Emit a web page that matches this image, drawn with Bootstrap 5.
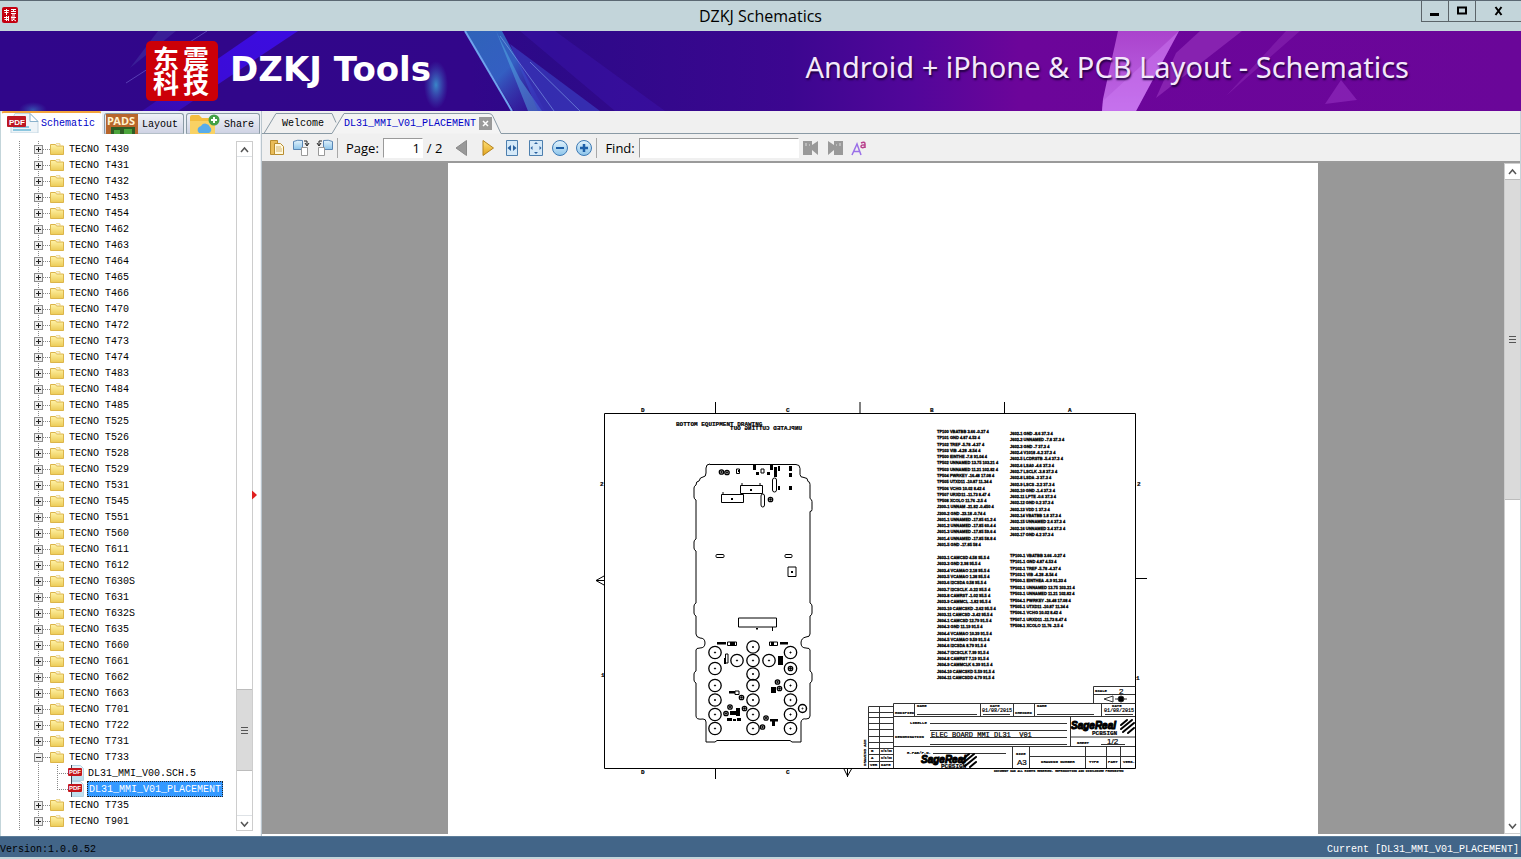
<!DOCTYPE html>
<html lang="en">
<head>
<meta charset="utf-8">
<meta name="viewport" content="width=device-width, initial-scale=1">
<title>DZKJ Schematics</title>
<link href="https://cdn.jsdelivr.net/npm/bootstrap@5.3.0/dist/css/bootstrap.min.css" rel="stylesheet">
<style>
:root { --frame:#c3d5da; --panel:#f0f0f0; --edge:#8a9aa5; --mono:"Liberation Mono","Noto Sans CJK SC",monospace; --ui:"Noto Sans","Open Sans",sans-serif; }
body { font:10px/16px var(--mono); color:#000; background:var(--frame); }
button, input { font:inherit; color:inherit; }
button { background:none; border:0; padding:0; }
.titlebar { height:31px; border-top:1px solid #5b6873; font:16px/30px "Open Sans","Noto Sans",sans-serif; }
.titlebar h1 { font:inherit; }
.app-icon { width:16px; height:16px; left:2px; top:6px; }
.win-buttons { border:1px solid #5b6469; border-top:0; border-right:0; height:21px; }
.win-buttons button { width:27px; border-right:1px solid #5b6469; }
.win-buttons button:last-child { width:45px; border-right:0; }
.banner { height:80px; padding-left:146px; padding-right:112px; color:#fff; background:#32068a; overflow:hidden; }
.banner-art { position:absolute; inset:0; width:100%; height:100%; }
.brand-mark { width:72px; height:60px; overflow:visible; }
.brand-name { font:bold 34px/40px "DejaVu Sans",sans-serif; margin:0 0 4px 12px; }
.tagline { font:29px/40px var(--ui); padding-bottom:8px; text-shadow:1px 2px 2px #200040; color:#f4e8fb; }
.work { padding-right:1px; }
.side { width:260px; border-left:1px solid var(--frame); }
.side-tabs { height:23px; background:#e9eef4; gap:2px; }
.side-tabs button { height:21px; margin-top:2px; border:1px solid var(--edge); border-bottom-color:#b4bfc8; border-radius:3px 3px 0 0; background:linear-gradient(#f0f2f8,#cfd3e4); padding:0 5px 0 1px; }
.side-tabs button.active { height:23px; margin-top:0; background:#fff; border-color:#fff; border-top:2px solid #f2a33a; color:#0000c8; padding:0 0 0 5px; gap:2px; }
.side-tabs svg { width:32px; height:20px; }
.side-tabs span { padding-top:2px; }
.tree-box { padding:7px 7px 5px 0; }
.tree { list-style:none; margin:0; padding:0; height:0; min-height:100%; overflow:hidden;
  background:repeating-linear-gradient(#888 0 1px,transparent 1px 2px) 18px 0/1px 100% no-repeat,
  repeating-linear-gradient(#888 0 1px,transparent 1px 2px) 37px 0/1px 100% no-repeat; }
.tree li { height:16px; padding-left:33px; }
.tree li.leaf { padding-left:56px; }
.toggle { width:9px; height:9px; border:1px solid #8c8c8c; background:#eee; flex:none; position:relative; }
.toggle::before, .toggle.plus::after { content:""; position:absolute; left:1px; top:3px; width:5px; height:1px; background:#222; }
.toggle.plus::after { left:3px; top:1px; width:1px; height:5px; }
.dots { width:7px; height:1px; background:repeating-linear-gradient(90deg,#888 0 1px,transparent 1px 2px); }
.leaf .stem { width:11px; height:16px; background:repeating-linear-gradient(#888 0 1px,transparent 1px 2px) 0 0/1px 100% no-repeat, repeating-linear-gradient(90deg,#888 0 1px,transparent 1px 2px) 0 8px/100% 1px no-repeat; }
.leaf.last .stem { background-size:1px 8px,100% 1px; }
.tree a { color:#000; text-decoration:none; line-height:14px; padding:2px 1px 0; white-space:nowrap; }
.tree .folder + a { margin-left:4px; }
.tree .pdf + a { margin-left:3px; }
.tree a.picked { color:#fff; background:#3399ff; outline:1px dotted #222; outline-offset:-1px; padding:2px 2px 0; }
.vscroll { width:17px; border:1px solid #cdcdcd; background:#fff; }
.vscroll button { height:15px; line-height:0; }
.vscroll .thumb { background:#dadada; border-top:1px solid #bcbcbc; border-bottom:1px solid #bcbcbc; }
.splitter { width:2px; background:#eef1f5; border-right:1px solid #bac6ce; }
.splitter svg { top:53%; }
.doc-tabs { height:23px; background:var(--panel); padding-left:20px; }
.doc-tabs > svg { position:absolute; left:0; top:0; width:100%; height:23px; }
.doc-tabs button { z-index:1; padding-top:3px; }
.doc-tabs .current { margin-left:20px; color:#0000c8; }
.doc-tabs .shut { margin-left:3px; padding-top:2px; }
.tools { height:29px; background:var(--panel); border-bottom:2px solid #9a9a9a; font:13px/20px "Open Sans","Noto Sans",sans-serif; padding-left:3px; }
.tools button { width:24px; height:24px; flex:none; line-height:0; }
.tools .prev { margin:0 2px 0 4px; }
.tools svg { width:18px; height:18px; }
.tools input { height:20px; border:1px solid #fff; border-color:#9a9a9a #fff #fff #9a9a9a; background:#fff; outline:0; }
.tools .rule { width:1px; height:20px; background:#a8a8a8; }
.page-no { width:40px; text-align:right; }
.find-text { width:160px; }
.viewer { background:#989898; overflow:hidden; }
.viewer .vscroll { width:16px; }
.sheet { width:870px; max-width:100%; background:#fff; height:0; min-height:100%; overflow:hidden; }
.sheet svg { width:100%; display:block; }
.foot-gap { height:2px; background:#fff; }
.ink { fill:none; stroke:#000; stroke-width:1; }
.hair { stroke-width:1; stroke:#333; }
.tx text { fill:#000; stroke:#000; stroke-width:.2; }
.t3 { font:bold 3px var(--mono); }
.t4 { font:bold 4px var(--mono); }
.t5 { font:5px var(--mono); }
.t6 { font:bold 6px var(--mono); }
.t7 { font:7px var(--mono); }
.t8 { font:8px "Liberation Sans",sans-serif; }
.net { font:bold 4px "Liberation Sans",sans-serif; }
.net text { stroke-width:.3; }
.logo-tx { font:italic bold 10px "Liberation Sans",sans-serif; }
.logo-tx text { stroke-width:1; }
.status { height:23px; background:#426588; border-top:1px solid #5d7d99; border-bottom:2px solid var(--frame); line-height:14px; }
.status .now { color:#fff; padding-right:2px; }
</style>
</head>
<body class="d-flex flex-column vh-100 overflow-hidden">

<svg width="0" height="0" class="position-absolute" aria-hidden="true">
  <defs>
    <linearGradient id="gold" x2="0" y2="1"><stop stop-color="#fff3a8"/><stop offset="1" stop-color="#eccb56"/></linearGradient>
    <linearGradient id="sky" x2="0" y2="1"><stop stop-color="#e3f3fc"/><stop offset="1" stop-color="#8cc4ea"/></linearGradient>
    <linearGradient id="amber" x2="0" y2="1"><stop stop-color="#ffe27a"/><stop offset="1" stop-color="#e0a21c"/></linearGradient>
  </defs>
  <symbol id="folder" viewBox="0 0 14 12"><path d="M.5 1.500h5l1 1.500h7v8.500H.5z" fill="url(#gold)" stroke="#dcb54a"/><path d="M6 .8h4v2" fill="none" stroke="#e9cd71"/></symbol>
  <symbol id="pdf" viewBox="0 0 16 16"><path d="M3.500 .5h9l3 3v12h-12z" fill="#e6f2f8" stroke="#b5d3e2"/><path d="M4 11h11v4H4z" fill="#bfe0ef"/><path d="M3.500 0v16" stroke="#445"/><rect y="3" width="14" height="8" rx="1" fill="#c4161c"/><text x="1" y="9" font-family="Liberation Sans" font-weight="bold" font-size="6" fill="#fff">PDF</text></symbol>
  <symbol id="up" viewBox="0 0 15 16"><path d="M4 10l3.500-4 3.500 4" fill="none" stroke="#555" stroke-width="1.500"/></symbol>
  <symbol id="down" viewBox="0 0 15 16"><path d="M4 6l3.500 4L11 6" fill="none" stroke="#555" stroke-width="1.500"/></symbol>
  <symbol id="grip" viewBox="0 0 7 7"><path d="M0 .5h7M0 3.500h7M0 6.500h7" stroke="#555"/></symbol>
</svg>

<header class="titlebar d-flex position-relative flex-shrink-0">
  <svg class="app-icon position-absolute" viewBox="0 0 16 16"><rect width="16" height="16" rx="2" fill="#c40010"/><path d="M2 3.500h5M4.500 2v6M2.500 5.500h4M9 2.500h5M11.500 2v2M9 4.500h5M9 6.500h5M10 8h3M2 10.500h5M4.500 9v5M2.500 12.500h4M6.500 9v5M9 10.500h5M10 9v5M12 9v3l-2 2M11 12l3 2" stroke="#fff" fill="none"/></svg>
  <h1 class="m-0 flex-grow-1 text-center">DZKJ Schematics</h1>
  <div class="win-buttons position-absolute end-0 top-0 d-flex">
    <button aria-label="Minimize"><svg class="d-block mx-auto" width="12" height="12"><path d="M1 9.500h9" stroke="#000" stroke-width="3"/></svg></button>
    <button aria-label="Maximize"><svg class="d-block mx-auto" width="12" height="12"><path d="M2 2.500h8v6H2z" fill="none" stroke="#000" stroke-width="2"/></svg></button>
    <button aria-label="Close"><svg class="d-block mx-auto" width="12" height="12"><path d="M2.500 2l6 8M8.500 2l-6 8" stroke="#000" stroke-width="2"/></svg></button>
  </div>
</header>

<section class="banner position-relative d-flex align-items-center flex-shrink-0">
  <svg class="banner-art" viewBox="0 31 1521 80" preserveAspectRatio="none" aria-hidden="true">
    <defs>
      <linearGradient id="bg"><stop stop-color="#30068a"/><stop offset=".31" stop-color="#32068a"/><stop offset=".36" stop-color="#2c0a88"/><stop offset=".52" stop-color="#3c0690"/><stop offset=".6" stop-color="#52069a"/><stop offset=".67" stop-color="#6c059a"/><stop offset="1" stop-color="#6a0699"/></linearGradient>
      <linearGradient id="beam" x2="1" y2="1"><stop stop-color="#2f63b8"/><stop offset=".5" stop-color="#3468c8" stop-opacity=".9"/><stop offset="1" stop-color="#3a1aa8" stop-opacity=".2"/></linearGradient>
      <linearGradient id="pink" x2="0" y2="1"><stop stop-color="#b14ad2"/><stop offset="1" stop-color="#c875f0"/></linearGradient>
      <linearGradient id="blueray" x1="1" x2="0" y2="1"><stop stop-color="#3c0ce0"/><stop offset=".55" stop-color="#3b0cd8"/><stop offset="1" stop-color="#3a10c0" stop-opacity=".6"/></linearGradient>
      <radialGradient id="glow"><stop stop-color="#3a86c8"/><stop offset="1" stop-color="#3a60c0" stop-opacity="0"/></radialGradient>
    </defs>
    <path d="M0 31h1521v80H0z" fill="url(#bg)"/>
    <path d="M258 31h40L178 111h-36z" fill="url(#blueray)"/>
    <path d="M158 31h18L130 68z" fill="#4436a4" opacity=".5"/><path d="M207 31L126 83" stroke="#6a58c8" opacity=".7"/>
    <ellipse cx="33" cy="110" rx="14" ry="8" fill="url(#glow)" opacity=".6"/>
    <ellipse cx="436" cy="85" rx="12" ry="24" fill="url(#glow)"/>
    <path d="M465 31h37l43 80h-31z" fill="url(#beam)"/>
    <path d="M465 31l47 80" stroke="#6ea4ee" stroke-width="2"/>
    <path d="M496 31l24 48 22 32h-14z" fill="#59b7e8" opacity=".45"/>
    <path d="M510 44l90 67h-62z" fill="#3c4ad0" opacity=".55"/>
    <path d="M500 36l54 75M530 62l50 49" stroke="#92b8f4" opacity=".5"/>
    <path d="M555 31l110 80h-50L520 31z" fill="#4319c0" opacity=".3"/>
    <path d="M1118 31h61l-43 80h-34l1-12z" fill="url(#pink)" opacity=".9"/>
    <path d="M1103 101l76-70-43 80h-34z" fill="#ce7cf4" opacity=".45"/>
    <path d="M1200 31h42l-86 67 20-45z" fill="#9a36c0" opacity=".6"/>
    <path d="M1286 31h14l-74 65z" fill="#8d2cb6" opacity=".5"/>
    <path d="M1341 80l16 20-32 4z" fill="#9c38c8" opacity=".5"/>
  </svg>
  <svg class="brand-mark position-relative" viewBox="0 0 72 60" role="img" aria-label="东震科技">
    <rect width="72" height="60" rx="5" fill="#cc0008"/>
    <g fill="#fff" font-family="Noto Sans CJK SC" font-weight="bold" font-size="26"><text x="7" y="28">东</text><text x="37" y="28">震</text><text x="7" y="52">科</text><text x="37" y="52">技</text></g>
  </svg>
  <div class="brand-name position-relative text-nowrap">DZKJ Tools</div>
  <div class="tagline position-relative ms-auto text-nowrap">Android + iPhone &amp; PCB Layout - Schematics</div>
</section>

<main class="work d-flex flex-grow-1">
  <aside class="side d-flex flex-column bg-white flex-shrink-0">
    <div class="side-tabs d-flex flex-shrink-0" role="tablist">
      <button class="active d-flex align-items-center flex-grow-1" role="tab"><svg viewBox="0 0 32 20"><path d="M8 .5h15l8 8V20H4V9z" fill="#eef4f8" stroke="#c3d6e2"/><path d="M23 .5l8 8h-8z" fill="#fff" stroke="#8ab2cc"/><path d="M6 14h16M6 17h18" stroke="#8cc7df" stroke-width="2"/><rect y="3" width="19" height="11" rx="1" fill="#bd1622"/><text x="2" y="12" font-family="Liberation Sans" font-weight="bold" font-size="8" fill="#fff">PDF</text></svg><span>Schematic</span></button>
      <button class="d-flex align-items-center" role="tab"><svg viewBox="0 0 32 20"><path d="M0 0h32v20H0z" fill="#b8662c"/><path d="M5 13h24v7H5z" fill="#2f5d25"/><path d="M8 16h6v4H8zM18 15h8v5h-8z" fill="#4ca53c"/><text x="1" y="11" font-family="Noto Sans" font-weight="bold" font-size="11" fill="#fff3d0">PADS</text></svg><span class="ms-1">Layout</span></button>
      <button class="d-flex align-items-center" role="tab"><svg viewBox="0 0 32 20"><path d="M2 3q0-2 2-2h7l3 3h12v16H2z" fill="#f3bd3e"/><path d="M2 7h25v13H2z" fill="#f9d264"/><path d="M11 19a4 4 0 012-7 5 5 0 019 1 3.500 3.500 0 01-1 6z" fill="#58acea"/><circle cx="26" cy="6" r="5.500" fill="#43a047"/><path d="M26 3v6M23 6h6" stroke="#fff" stroke-width="2"/></svg><span class="ms-1">Share</span></button>
    </div>
    <div class="tree-box d-flex flex-grow-1">
      <ul class="tree flex-grow-1" id="tree"></ul>
      <div class="vscroll d-flex flex-column">
        <button aria-label="Scroll up" class="border-bottom"><svg width="15" height="16"><use href="#up"/></svg></button>
        <div style="flex:533"></div>
        <div class="thumb d-flex align-items-center justify-content-center" style="flex:80"><svg width="7" height="7"><use href="#grip"/></svg></div>
        <div style="flex:44"></div>
        <button aria-label="Scroll down" class="border-top"><svg width="15" height="16"><use href="#down"/></svg></button>
      </div>
    </div>
  </aside>
  <div class="splitter flex-shrink-0 position-relative"><svg class="position-absolute end-0 translate-middle-y me-1" width="5" height="9"><path d="M0 0l5 4.500L0 9z" fill="#e02020"/></svg></div>

  <section class="d-flex flex-column flex-grow-1 overflow-hidden">
    <div class="doc-tabs d-flex align-items-center position-relative flex-shrink-0" role="tablist">
      <svg aria-hidden="true"><path d="M2 22.500L14 2.500h56l4 9" fill="none" stroke="#8a9aa5"/><path d="M70 22.500L82 2.500h145q3 0 4 3l8 17H70" fill="#f4f4f4"/><path d="M0 22.500h70L82 2.500h145q3 0 4 3l8 17h1400" fill="none" stroke="#8a9aa5"/></svg>
      <button role="tab">Welcome</button>
      <button role="tab" class="current text-nowrap">DL31_MMI_V01_PLACEMENT</button>
      <button class="shut lh-1" aria-label="Close tab"><svg class="d-block" width="13" height="13"><path d="M0 0h13v13H0z" fill="#9a9a9a"/><path d="M4 4l5 5M9 4L4 9" stroke="#fff" stroke-width="1.500"/></svg></button>
    </div>
    <div class="tools d-flex align-items-center flex-shrink-0">
      <button aria-label="Open"><svg viewBox="0 0 18 18"><path d="M2.500 1.500h7v14h-7z" fill="#e9bc58" stroke="#b98d2f"/><path d="M6.500 4.500h6l3 3v8h-9z" fill="#fff8dc" stroke="#b98d2f"/><path d="M8 8h5M8 10h6M8 12h6" stroke="#d6b670"/></svg></button>
      <button aria-label="Rotate left"><svg viewBox="0 0 18 18"><path d="M1.500 2.500q4-2 9-1v9h-9z" fill="url(#sky)" stroke="#5a86b4"/><path d="M9.500 8.500h6v8h-6z" fill="#fff" stroke="#999"/><path d="M12 2h3v4M13 4l2 3 2-3" fill="none" stroke="#222"/></svg></button>
      <button aria-label="Rotate right"><svg viewBox="0 0 18 18"><path d="M7.500 1.500q5-1 9 1v8h-9z" fill="url(#sky)" stroke="#5a86b4"/><path d="M2.500 8.500h6v8h-6z" fill="#fff" stroke="#999"/><path d="M6 2H3v4M1 4l2 3 2-3" fill="none" stroke="#222"/></svg></button>
      <span class="rule"></span>
      <label for="pg" class="ms-2 me-1">Page:</label>
      <input id="pg" class="page-no" value="1"><span class="mx-1">/ 2</span>
      <button aria-label="Previous page" class="prev"><svg viewBox="0 0 18 18"><path d="M13.500 1.500v15L3 9z" fill="#999" stroke="#8a8a8a"/></svg></button>
      <button aria-label="Next page"><svg viewBox="0 0 18 18"><path d="M4 1.500v15L14.500 9z" fill="url(#amber)" stroke="#b5831e"/></svg></button>
      <button aria-label="Fit width"><svg viewBox="0 0 18 18"><path d="M3.500 1.500h11v15h-11z" fill="#d5e9f8" stroke="#4d7fae"/><path d="M8 6v6L4.500 9zM10 6v6L13.500 9z" fill="#2b62a0"/></svg></button>
      <button aria-label="Fit page"><svg viewBox="0 0 18 18"><path d="M2.500 1.500h13v15h-13z" fill="#d5e9f8" stroke="#4d7fae"/><path d="M7 5l2-2 2 2zM7 13l2 2 2-2zM5.500 7l-2 2 2 2zM12.500 7l2 2-2 2z" fill="#2b62a0"/></svg></button>
      <button aria-label="Zoom out"><svg viewBox="0 0 18 18"><circle cx="9" cy="9" r="7.500" fill="url(#sky)" stroke="#3d7ab5"/><path d="M5 9h8" stroke="#1d5fa8" stroke-width="2"/></svg></button>
      <button aria-label="Zoom in"><svg viewBox="0 0 18 18"><circle cx="9" cy="9" r="7.500" fill="url(#sky)" stroke="#3d7ab5"/><path d="M5 9h8M9 5v8" stroke="#1d5fa8" stroke-width="2.500"/></svg></button>
      <span class="rule"></span>
      <label for="fd" class="ms-2 me-1">Find:</label>
      <input id="fd" class="find-text">
      <button aria-label="Find previous"><svg viewBox="0 0 18 18"><path d="M1 2h9v4l6-4v14l-6-5v5H1z" fill="#999"/><path d="M3 4h2v3H3zM7 5h1v2H7z" fill="#bbb"/></svg></button>
      <button aria-label="Find next"><svg viewBox="0 0 18 18"><path d="M17 2H8v4L2 2v14l6-5v5h9z" fill="#999"/><path d="M13 4h2v3h-2zM10 5h1v2h-1z" fill="#bbb"/></svg></button>
      <button aria-label="Match case"><svg viewBox="0 0 18 18"><path d="M2 16L7 5l4 11M3.500 12.500h6" fill="none" stroke="#9a70e8" stroke-width="1.500"/><path d="M11 4q4-2 4 1v4M15 6q-4-.5-4 1.500t4 .5" fill="none" stroke="#b8408c" stroke-width="1.500"/></svg></button>
    </div>
    <div class="viewer d-flex flex-grow-1">
      <div class="flex-grow-1 d-flex justify-content-center">
        <div class="sheet">
          <svg viewBox="448 163 870 671" role="img" aria-label="Board placement drawing">
            <g class="ink">
              <path d="M604.500 413.500h531v355h-531zM715.500 402v11M860 402v11M1004.500 402v11M715.500 768v11M1136 578.500h11M604 576l-8 4.500 8 4.500M596 580.500h8M844 769l3.500 7 4-7M847.500 768v9"/>
              <path d="M710 464.500H796q4 0 4 4v6q0 3 4 3t4 4q2 0 2 3v14q2 1 2 3v8q0 2-2 2V603q2 1 2 3v7q0 2-2 3V634q0 3-4 3-5 1-5 6t5 5q4 0 4 2V671q2 1 2 3v6q0 2-2 3V716q0 3-4 3-4-1-5 3V742H792l-2-1.500H717l-2 1.500H706V722q0-3-3-3-7 1-7-3V683q-2-1-2-3v-6q0-2 2-3V650q0-2 4-2 5 0 5-5t-5-5q-4-1-4-4V616q-2-1-2-3v-7q0-2 2-3V551q-2-1-2-3v-6q0-2 2-3V500q-2-1-2-3v-9q0-2 2-3 0-4 3-4 1-4 4-4 3 0 3-4v-5q0-4 4-4z"/>
              <path d="M740.500 485.500h22v8h-22zM721.500 494.500h22v8h-22zM738.500 618h38v9h-38zM788 567h8v9.500h-8z"/>
              <rect x="772.500" y="478" width="4" height="14" rx="2"/><rect x="761" y="494" width="3.500" height="13" rx="2"/><rect x="716" y="554.500" width="8" height="3" rx="1"/><rect x="785" y="554.500" width="7" height="3" rx="1"/>
              <path d="M736.500 469h3v4.500h-3zM761 469h3v4h-3zM727.500 642h9v3.500h-9zM769.500 642h8v3.500h-8zM725.500 654h2.500v9h-2.500zM735 691h4v3.500h-4z"/>
            </g>
            <g>
              <path d="M753 465h3v5h-3zM770 465h3v5h-3zM774 467h3v10h-3zM778 466h2v5h-2zM789 466h3v5h-3zM789 473h3v4h-3zM789 486h3v4h-3zM778 486h2v4h-2zM756 472h3v3h-3zM767 472h3v3h-3zM750 489h2v2h-2zM731 498h2v2h-2zM791 571h2v2h-2zM738 470h1v2h-1zM717 642h9v2.500h-9zM730 642h5v3h-5zM780 642h8v2.500h-8zM771 642h3v3h-3zM756 628h2v1.500h-2zM772 627h1v4h-1zM729 691h6v2.500h-6zM771 687h5v6h-5zM778 656h5v9h-5zM736 708h4v8h-4zM730 711h6v4h-6zM727 718h5v3h-5zM733 719h3v2h-3zM737 718h4v3h-4zM770 719h8v2.500h-8zM772 721h3v5h-3zM724 658h2v6h-2z"/>
              <path class="ink" d="M742 485v-2M760 485v-2M723 494v-2"/>
            </g>
            <g id="pads" class="ink"></g>
            <g class="ink hair">
              <path d="M893.500 768V703.500h242M893 716.500h242M893 746.500h242M1070 737h65M1029 756.500h106M914.500 703v13M980.500 703v13M1013.500 703v13M1034.500 703v13M1101.500 703v13M1093.500 703v-16.500h42M1093 694.500h42M1070.500 716v30M1012.500 746v22M1029.500 746v22M1085.500 746v22M1106.500 746v22M1120.500 746v22M917 714.500h60M983 714.500h27M1037 714.500h57M1105 714.500h28M930 723.500h137M930 730.500h137M930 737.500h137M930 744.500h137M933 753.500h73M1101 744.500h24"/>
              <path d="M868.500 768V706.500h25M879.500 706v62M868 712.500h25M868 717.500h25M868 723.500h25M868 729.500h25M868 736.500h25M868 742.500h25M868 748.500h25M868 754.500h25M868 761.500h25"/>
              <path d="M1104 699l9-3v6zM1115 699h12"/><circle cx="1121" cy="699" r="3" fill="#000"/>
            </g>
            <g class="tx">
              <g class="t6">
                <text x="676" y="426">BOTTOM EQUIPMENT DRAWING</text>
                <text transform="translate(802 430) scale(-1 1)">UNPLATED CUTTING OUT</text>
                <text x="641" y="412">D</text><text x="786" y="412">C</text><text x="930" y="412">B</text><text x="1068" y="412">A</text>
                <text x="641" y="774">D</text><text x="786" y="774">C</text>
                <text x="600" y="486">2</text><text x="1137" y="486">2</text><text x="601" y="677">1</text><text x="1136" y="680">1</text>
              </g>
              <g class="t4">
                <text x="917" y="707">NAME</text><text x="1037" y="707">NAME</text><text x="990" y="707">DATE</text><text x="1112" y="707">DATE</text>
                <text x="895" y="714">MODIFIED</text><text x="1015" y="714">CHECKED</text><text x="1095" y="692">SCALE</text>
                <text x="910" y="724">LIBELLE</text><text x="895" y="738">DENOMINATION</text><text x="907" y="754">R.FAB/P.N.</text>
                <text x="1077" y="744">SHEET</text><text x="1016" y="755">SIZE</text><text x="1041" y="763">DRAWING NUMBER</text>
                <text x="1089" y="763">TYPE</text><text x="1108" y="763">PART</text><text x="1123" y="763">VERS.</text>
                <text x="870" y="766">VER</text><text x="881" y="766">DATE</text><text x="871" y="759">A</text><text x="871" y="752">B</text>
                <text transform="translate(866 766) rotate(-90)">DRAWING A3H</text>
              </g>
              <g class="t3">
                <text x="881" y="752">0/0/00</text><text x="881" y="759">0/0/00</text>
                <text x="994" y="772">DOCUMENT DAN ALL RIGHTS RESERVED. REPRODUCTION AND DISCLOSURE PROHIBITED</text>
              </g>
              <g class="t5"><text x="982" y="712">01/08/2015</text><text x="1104" y="712">01/08/2015</text></g>
              <text class="t7" x="931" y="737" xml:space="preserve">ELEC BOARD MMI DL31  V01</text>
              <g class="t8"><text x="1119" y="694">2</text><text x="1107" y="744">1/2</text><text x="1017" y="765">A3</text></g>
              <g class="logo-tx"><text x="1071" y="729">SageReal</text><text x="921" y="763">SageReal</text></g>
              <g class="t6"><text x="1092" y="735">PCBSIGN</text><text x="941" y="768">PCBSIGN</text></g>
            </g>
            <g class="ink" stroke-linecap="round"><path id="swirl" stroke-width="2" d="M1121 725l6-5M1121 729l11-9M1123 732l11-9M1128 733l6-5"/><use href="#swirl" x="-158" y="34"/></g>
            <g id="nets" class="tx net"></g>
          </svg>
        </div>
      </div>
      <div class="vscroll d-flex flex-column border-end-0">
        <button aria-label="Page up"><svg width="15" height="16"><use href="#up"/></svg></button>
        <div class="thumb d-flex align-items-center justify-content-center" style="flex:321"><svg width="7" height="7"><use href="#grip"/></svg></div>
        <div style="flex:320"></div>
        <button aria-label="Page down"><svg width="15" height="16"><use href="#down"/></svg></button>
      </div>
    </div>
    <div class="foot-gap"></div>
  </section>
</main>

<footer class="status d-flex justify-content-between flex-shrink-0 align-items-end">
  <span>Version:1.0.0.52</span><span class="now">Current [DL31_MMI_V01_PLACEMENT]</span>
</footer>

<script src="https://cdn.jsdelivr.net/npm/bootstrap@5.3.0/dist/js/bootstrap.bundle.min.js"></script>
<script>
const models = "T430 T431 T432 T453 T454 T462 T463 T464 T465 T466 T470 T472 T473 T474 T483 T484 T485 T525 T526 T528 T529 T531 T545 T551 T560 T611 T612 T630S T631 T632S T635 T660 T661 T662 T663 T701 T722 T731 T733 T735 T901".split(" ");
const files = { T733: ["DL31_MMI_V00.SCH.5", "DL31_MMI_V01_PLACEMENT"] };
const folder = `<svg class="folder flex-shrink-0" width="14" height="12"><use href="#folder"/></svg>`;
let rows = "";
for (const m of models) {
  const kids = files[m];
  rows += `<li class="d-flex align-items-center"><span class="toggle ${kids ? "" : "plus"}"></span><span class="dots"></span>${folder}<a href="#">TECNO ${m}</a></li>`;
  (kids || []).forEach((f, i) => rows += `<li class="leaf d-flex align-items-center ${i == kids.length - 1 ? "last" : ""}"><span class="stem"></span><svg class="pdf flex-shrink-0" width="16" height="16"><use href="#pdf"/></svg><a href="#" class="${i ? "picked" : ""}">${f}</a></li>`);
}
rows += `<li class="d-flex align-items-center"><span class="toggle plus"></span><span class="dots"></span>${folder}</li>`;
document.getElementById("tree").innerHTML = rows;

const rowsY = [685.5, 700, 714.5, 728.5];
const pads = [[737,660.5],[769,660.5],[753,647],[753,660.5],[753,674]];
for (const x of [715, 790.5]) for (const y of [652.5, 668.5, ...rowsY]) pads.push([x, y]);
for (const y of rowsY) pads.push([753, y]);
const small = [[721.5,472],[727,472.5],[770.5,499.5],[790.5,668.5],[777.5,682],[779.5,688.5],[741.5,697.5],[744.5,708.5],[730,707],[726,713.5],[766,718],[762.5,727]];
document.getElementById("pads").innerHTML =
  pads.map(([x, y]) => `<circle cx="${x}" cy="${y}" r="6.200" stroke-width="1.300"/><circle cx="${x}" cy="${y}" r=".6" fill="#000"/>`).join("") +
  `<circle cx="802.500" cy="708.500" r="4" stroke-width="1.500"/><circle cx="802.500" cy="708.500" r=".5"/>` +
  small.map(([x, y]) => `<circle cx="${x}" cy="${y}" r="2.200" stroke-width="1.300"/><circle cx="${x}" cy="${y}" r=".8" fill="#000"/>`).join("");

const nets = [
 [937, 433, 546, `TP100 VBATBB 3.66 -0.27 4|TP101 GND 4.87 4.53 4|TP102 TREF -5.78 -4.37 4|TP103 VIB -4.28 -8.54 4|TP500 EINTHE -7.8 91.04 4|TP502 UNNAMED 13.75 103.21 4|TP503 UNNAMED 11.21 102.82 4|TP504 PWRKEY -16.48 17.08 4|TP505 UTXD11 -10.87 11.34 4|TP506 VCHG 10.02 8.42 4|TP507 URXD11 -11.73 8.47 4|TP508 XCOLO 11.76 -2.5 4|J300-1 UNNAM -21.82 -0.450 4|J300-2 GND -23.18 -0.74 4|J601-1 UNNAMED -17.85 61.2 4|J601-2 UNNAMED -17.85 60.4 4|J601-3 UNNAMED -17.85 59.6 4|J601-4 UNNAMED -17.85 58.8 4|J601-5 GND -17.85 58 4`],
 [1010, 435, 536, `J602-1 GND -8.6 37.3 4|J602-2 UNNAMED -7.8 37.3 4|J602-3 GND -7 37.3 4|J602-4 V1018 -6.2 37.3 4|J602-5 LCDRSTB -5.4 37.3 4|J602-6 LSA0 -4.6 37.3 4|J602-7 LSCLK -3.8 37.3 4|J602-8 LSDA -3 37.3 4|J602-9 LSCS -2.2 37.3 4|J602-10 GND -1.4 37.3 4|J602-11 LPTE -0.6 37.3 4|J602-12 GND 0.2 37.3 4|J602-13 VDD 1 37.3 4|J602-14 VBATBB 1.8 37.3 4|J602-15 UNNAMED 2.6 37.3 4|J602-16 UNNAMED 3.4 37.3 4|J602-17 GND 4.2 37.3 4`],
 [937, 559, 679, `J603-1 CAMCSD 4.58 95.5 4|J603-3 GND 2.98 95.5 4|J603-4 VCAMAO 2.18 95.5 4|J603-5 VCAMAO 1.38 95.5 4|J603-6 I2CSDA 0.58 95.5 4|J603-7 I2CSCLK -0.22 95.5 4|J603-8 CAMRST -1.02 95.5 4|J603-9 CAMMCL -1.82 95.5 4|J603-10 CAMCSKD -2.62 95.5 4|J603-11 CAMCSD -3.42 95.5 4|J604-1 CAMCSD 12.79 91.5 4|J604-3 GND 11.19 91.5 4|J604-4 VCAMAO 10.39 91.5 4|J604-5 VCAMAO 9.59 91.5 4|J604-6 I2CSDA 8.79 91.5 4|J604-7 I2CSCLK 7.99 91.5 4|J604-8 CAMRST 7.19 91.5 4|J604-9 CAMMCLK 6.39 91.5 4|J604-10 CAMCSKD 5.59 91.5 4|J604-11 CAMCSDD 4.79 91.5 4`],
 [1010, 557, 627, `TP100-1 VBATBB 3.66 -0.27 4|TP101-1 GND 4.87 4.53 4|TP102-1 TREF -5.78 -4.37 4|TP103-1 VIB -4.28 -8.54 4|TP500-1 EINTHEA -6.9 91.33 4|TP502-1 UNNAMED 13.75 103.21 4|TP503-1 UNNAMED 11.21 102.82 4|TP504-1 PWRKEY -16.48 17.08 4|TP505-1 UTXD11 -10.87 11.34 4|TP506-1 VCHG 10.02 8.42 4|TP507-1 URXD11 -11.73 8.47 4|TP508-1 XCOLO 11.76 -2.5 4`]
];
document.getElementById("nets").innerHTML = nets.map(([x, a, b, s]) => {
  const l = s.split("|"), step = (b - a) / (l.length - 1);
  return l.map((t, i) => `<text x="${x}" y="${a + i * step}">${t}</text>`).join("");
}).join("");
</script>
</body>
</html>
